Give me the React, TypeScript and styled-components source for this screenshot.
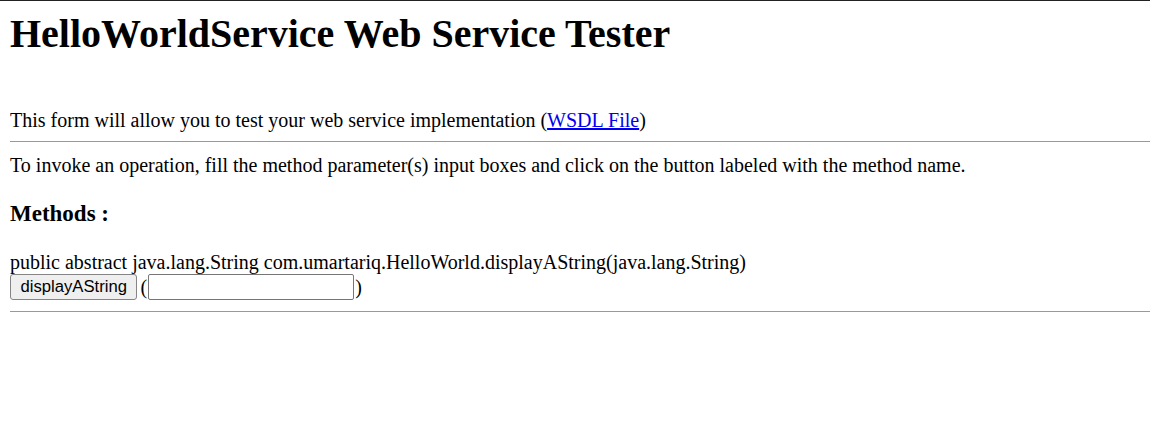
import React from 'react';
import styled, { createGlobalStyle } from 'styled-components';

const GlobalStyle = createGlobalStyle`
  html, body {
    margin: 0;
    padding: 0;
    background: #ffffff;
  }
  body {
    border-top: 1px solid #222222;
    font-family: 'Liberation Serif', 'Times New Roman', serif;
    font-size: 20px;
    color: #000000;
  }
`;

const Page = styled.div`
  padding: 0 10px;
`;

const Title = styled.h1`
  font-size: 40px;
  font-weight: bold;
  margin: 10px 0 0;
  line-height: 1.15;
`;

const Intro = styled.p`
  margin: 52px 0 0;
  line-height: 1.15;
`;

const WsdlLink = styled.a`
  color: #0000ee;
  text-decoration: underline;
`;

const Rule = styled.hr<{ $top: number }>`
  border: 0;
  border-top: 1px solid #999999;
  margin: ${({ $top }) => $top}px -10px 0 0;
`;

const Hint = styled.p`
  margin: 12px 0 0;
  line-height: 1.15;
`;

const SectionTitle = styled.h3`
  font-size: 23px;
  font-weight: bold;
  margin: 24px 0 0;
  line-height: 1.15;
`;

const Signature = styled.div`
  margin-top: 24px;
  line-height: 1.15;
`;

const CallRow = styled.form`
  display: flex;
  align-items: center;
  margin: 0;
  height: 26px;
`;

const MethodButton = styled.button`
  font-family: Arial, 'Liberation Sans', sans-serif;
  font-size: 16.67px;
  padding: 0 9.5px;
  height: 26px;
  border: 1px solid #858585;
  border-radius: 3px;
  background: #efefef;
  color: #000;
`;

const Paren = styled.span<{ $left: number; $right: number }>`
  font-size: 20px;
  margin: 0 ${({ $right }) => $right}px 0 ${({ $left }) => $left}px;
`;

const ParamInput = styled.input`
  width: 206px;
  height: 26px;
  box-sizing: border-box;
  border: 1px solid #767676;
  border-radius: 2px;
  padding: 1px 2px;
`;

export default function App() {
  return (
    <>
      <GlobalStyle />
      <Page>
        <Title>HelloWorldService Web Service Tester</Title>
        <Intro>
          This form will allow you to test your web service implementation (
          <WsdlLink href="#">WSDL File</WsdlLink>)
        </Intro>
        <Rule $top={9} />
        <Hint>
          To invoke an operation, fill the method parameter(s) input boxes and click on the button
          labeled with the method name.
        </Hint>
        <SectionTitle>Methods :</SectionTitle>
        <Signature>
          public abstract java.lang.String com.umartariq.HelloWorld.displayAString(java.lang.String)
        </Signature>
        <CallRow onSubmit={(e) => e.preventDefault()}>
          <MethodButton type="button">displayAString</MethodButton>
          <Paren $left={3} $right={1}>(</Paren>
          <ParamInput type="text" />
          <Paren $left={1} $right={0}>)</Paren>
        </CallRow>
        <Rule $top={11} />
      </Page>
    </>
  );
}
